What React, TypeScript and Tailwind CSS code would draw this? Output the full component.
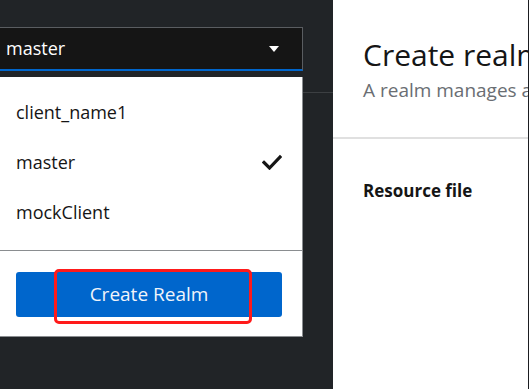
import React from "react";

const realms = ["client_name1", "master", "mockClient"];

const CheckIcon = () => (
  <svg width="20" height="16" viewBox="0 0 20 16" fill="none">
    <path d="M2 8.5 L7.5 14 L18 3" stroke="#151515" strokeWidth="3.2" strokeLinecap="square" />
  </svg>
);

const RealmDropdown: React.FC = () => {
  const selected = "master";

  return (
    <div className="relative h-full w-[333px] bg-[#212427]">
      <div className="pt-[27px]">
        <div className="flex h-[44px] w-[303px] items-center justify-between border-t border-r border-[#5a5d61] border-b-2 border-b-[#0066cc] bg-[#151515] pl-[6px] pr-[22px]">
          <span className="text-[18px] text-white">master</span>
          <svg width="12" height="8" viewBox="0 0 12 8">
            <path d="M1 1 L11 1 L6 7 Z" fill="#ffffff" />
          </svg>
        </div>
      </div>
      <div className="mt-[21px] h-px w-full bg-[#3c3f42]" />

      <div className="absolute left-0 top-[77px] w-[303px] border-r border-b border-[#8a8d90] bg-white">
        <ul className="pt-[10px] pb-[13px]">
          {realms.map((name) => (
            <li
              key={name}
              className="flex h-[50px] items-center justify-between pl-[16px] pr-[20px] text-[18px] text-[#151515]"
            >
              <span>{name}</span>
              {name === selected && <CheckIcon />}
            </li>
          ))}
        </ul>
        <div className="h-px w-full bg-[#8a8d90]" />
        <div className="px-[16px] pt-[21px] pb-[19px]">
          <div className="relative">
            <button className="h-[45px] w-[266px] rounded-[3px] bg-[#0066cc] text-[19px] text-[#f0f4fa]">
              Create Realm
            </button>
            <div className="pointer-events-none absolute left-[38px] top-[-3px] h-[55px] w-[198px] rounded-[5px] border-[3px] border-[#ff1a1a]" />
          </div>
        </div>
      </div>
    </div>
  );
};

export default function App() {
  return (
    <div
      className="flex h-[389px] w-[529px] overflow-hidden bg-[#212427]"
      style={{ fontFamily: '"Open Sans", "Liberation Sans", sans-serif' }}
    >
      <RealmDropdown />
      <div className="h-full w-[195px] overflow-hidden whitespace-nowrap bg-white">
        <div className="pl-[30px] pt-[37px] pb-[34px]">
          <h1 className="text-[30px] leading-[36px] text-[#151515]">Create realm</h1>
          <p className="mt-[5px] text-[19px] leading-[25px] text-[#6a6e73]">
            A realm manages a set of users
          </p>
        </div>
        <div className="h-[2px] w-full bg-[#e0e0e0]" />
        <div className="pl-[30px] pt-[40px]">
          <span className="text-[17px] font-bold leading-[24px] text-[#151515]">Resource file</span>
        </div>
      </div>
      <div className="h-full w-px bg-[#1b1d21]" />
    </div>
  );
}
